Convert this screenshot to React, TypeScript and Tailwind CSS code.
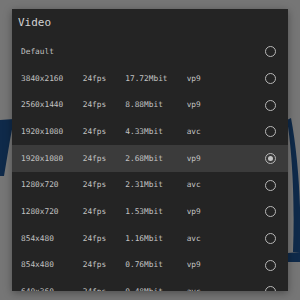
import React from "react";

type Stream = { res: string; fps: string; rate: string; codec: string };

const streams: Stream[] = [
  { res: "3840x2160", fps: "24fps", rate: "17.72Mbit", codec: "vp9" },
  { res: "2560x1440", fps: "24fps", rate: "8.88Mbit", codec: "vp9" },
  { res: "1920x1080", fps: "24fps", rate: "4.33Mbit", codec: "avc" },
  { res: "1920x1080", fps: "24fps", rate: "2.68Mbit", codec: "vp9" },
  { res: "1280x720", fps: "24fps", rate: "2.31Mbit", codec: "avc" },
  { res: "1280x720", fps: "24fps", rate: "1.53Mbit", codec: "vp9" },
  { res: "854x480", fps: "24fps", rate: "1.16Mbit", codec: "avc" },
  { res: "854x480", fps: "24fps", rate: "0.76Mbit", codec: "vp9" },
  { res: "640x360", fps: "24fps", rate: "0.48Mbit", codec: "avc" },
];

const SELECTED = 3;

function Radio({ checked }: { checked: boolean }) {
  return (
    <span className="w-[11px] h-[11px] rounded-full border-[1.5px] border-[#b8b8b8] flex items-center justify-center">
      {checked && <span className="w-[5px] h-[5px] rounded-full bg-[#c4c4c4]" />}
    </span>
  );
}

export default function App() {
  return (
    <div className="relative w-[300px] h-[300px] overflow-hidden bg-[#767676] font-['DejaVu_Sans_Mono',monospace]">
      {/* backdrop picture behind the dim layer */}
      <svg className="absolute inset-0" width="300" height="300" viewBox="0 0 300 300">
        <path d="M0 120 L14 119 L10 140 L4 176 L0 176 Z" fill="#0f2a4a" />
        <path d="M287 120 C292 150 295 200 293 252 L300 252 L300 232 C301 195 297 150 291 118 Z" fill="#0f2a4a" />
        <path d="M288 253 L300 252 L300 262 L288 262 Z" fill="#0f2a4a" />
      </svg>

      <div className="relative flex pl-[12px] pt-[9px]">
        <div className="w-[276px] h-[282px] overflow-hidden bg-[#242424] shadow-[0_2px_8px_rgba(0,0,0,0.35)]">
          <div className="h-[29.67px] pl-[6px] pt-[7px] text-[11px] leading-[13px] text-[#d2d2d2]">
            Video
          </div>

          <div className="flex items-center justify-between h-[26.67px] pl-[9px] pr-[12.5px] text-[7.8px] text-[#c2c2c2]">
            <span>Default</span>
            <Radio checked={false} />
          </div>

          {streams.map((s, i) => (
            <div
              key={i}
              className={
                "grid grid-cols-[61.7px_42.6px_61.4px_1fr_auto] items-center h-[26.67px] pl-[9px] pr-[12.5px] text-[7.8px] text-[#c2c2c2] " +
                (i === SELECTED ? "bg-[#3b3b3b]" : "")
              }
            >
              <span>{s.res}</span>
              <span>{s.fps}</span>
              <span>{s.rate}</span>
              <span>{s.codec}</span>
              <Radio checked={i === SELECTED} />
            </div>
          ))}
        </div>
      </div>
    </div>
  );
}
